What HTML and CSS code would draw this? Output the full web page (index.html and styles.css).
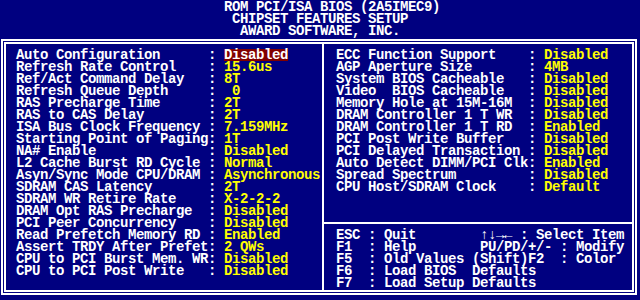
FILE: index.html
```html
<!DOCTYPE html>
<html lang="en">

<head>
    <meta charset="UTF-8">
    <meta name="viewport" content="width=device-width, initial-scale=1.0">
    <title>Chipset Features Setup</title>
    <link rel="stylesheet" href="styles.css">
</head>

<body>
    <div class="screen">
        <!-- Header -->
        <div class="head">
            <div class="head-line l1">ROM PCI/ISA BIOS (2A5IMEC9)</div>
            <div class="head-line l2">CHIPSET FEATURES SETUP</div>
            <div class="head-line l3">AWARD SOFTWARE, INC.</div>
        </div>

        <!-- Double frame -->
        <div class="frame">
            <div class="frame-inner">

                <!-- Left column of options -->
                <div class="panel panel-left">
                    <div class="opt"><span>Auto Configuration</span><span>:</span><span class="val"><span class="sel">Disabled</span></span></div>
                    <div class="opt"><span>Refresh Rate Control</span><span>:</span><span class="val">15.6us</span></div>
                    <div class="opt"><span>Ref/Act Command Delay</span><span>:</span><span class="val">8T</span></div>
                    <div class="opt"><span>Refresh Queue Depth</span><span>:</span><span class="val"> 0</span></div>
                    <div class="opt"><span>RAS Precharge Time</span><span>:</span><span class="val">2T</span></div>
                    <div class="opt"><span>RAS to CAS Delay</span><span>:</span><span class="val">2T</span></div>
                    <div class="opt"><span>ISA Bus Clock Frequency</span><span>:</span><span class="val">7.159MHz</span></div>
                    <div class="opt"><span>Starting Point of Paging</span><span>:</span><span class="val">1T</span></div>
                    <div class="opt"><span>NA# Enable</span><span>:</span><span class="val">Disabled</span></div>
                    <div class="opt"><span>L2 Cache Burst RD Cycle</span><span>:</span><span class="val">Normal</span></div>
                    <div class="opt"><span>Asyn/Sync Mode CPU/DRAM</span><span>:</span><span class="val">Asynchronous</span></div>
                    <div class="opt"><span>SDRAM CAS Latency</span><span>:</span><span class="val">2T</span></div>
                    <div class="opt"><span>SDRAM WR Retire Rate</span><span>:</span><span class="val">X-2-2-2</span></div>
                    <div class="opt"><span>DRAM Opt RAS Precharge</span><span>:</span><span class="val">Disabled</span></div>
                    <div class="opt"><span>PCI Peer Concurrency</span><span>:</span><span class="val">Disabled</span></div>
                    <div class="opt"><span>Read Prefetch Memory RD</span><span>:</span><span class="val">Enabled</span></div>
                    <div class="opt"><span>Assert TRDY After Prefet</span><span>:</span><span class="val">2 QWs</span></div>
                    <div class="opt"><span>CPU to PCI Burst Mem. WR</span><span>:</span><span class="val">Disabled</span></div>
                    <div class="opt"><span>CPU to PCI Post Write</span><span>:</span><span class="val">Disabled</span></div>
                </div>

                <!-- Right column: options + key help -->
                <div class="panel panel-right">
                    <div class="opt-list">
                        <div class="opt"><span>ECC Function Support</span><span>:</span><span class="val">Disabled</span></div>
                        <div class="opt"><span>AGP Aperture Size</span><span>:</span><span class="val">4MB</span></div>
                        <div class="opt"><span>System BIOS Cacheable</span><span>:</span><span class="val">Disabled</span></div>
                        <div class="opt"><span>Video  BIOS Cacheable</span><span>:</span><span class="val">Disabled</span></div>
                        <div class="opt"><span>Memory Hole at 15M-16M</span><span>:</span><span class="val">Disabled</span></div>
                        <div class="opt"><span>DRAM Controller 1 T WR</span><span>:</span><span class="val">Disabled</span></div>
                        <div class="opt"><span>DRAM Controller 1 T RD</span><span>:</span><span class="val">Enabled</span></div>
                        <div class="opt"><span>PCI Post Write Buffer</span><span>:</span><span class="val">Disabled</span></div>
                        <div class="opt"><span>PCI Delayed Transaction</span><span>:</span><span class="val">Disabled</span></div>
                        <div class="opt"><span>Auto Detect DIMM/PCI Clk</span><span>:</span><span class="val">Enabled</span></div>
                        <div class="opt"><span>Spread Spectrum</span><span>:</span><span class="val">Disabled</span></div>
                        <div class="opt"><span>CPU Host/SDRAM Clock</span><span>:</span><span class="val">Default</span></div>
                    </div>

                    <div class="help">
                        <div class="help-line">ESC : Quit        ↑↓→← : Select Item</div>
                        <div class="help-line">F1  : Help        PU/PD/+/- : Modify</div>
                        <div class="help-line">F5  : Old Values (Shift)F2  : Color</div>
                        <div class="help-line">F6  : Load BIOS  Defaults</div>
                        <div class="help-line">F7  : Load Setup Defaults</div>
                    </div>
                </div>

            </div>
        </div>
    </div>
</body>

</html>
```

FILE: styles.css
```css
/* Text mode screen: 80 x 25 cells of 8 x 12 px */
body {
    margin: 0;
    background-color: #000080;
    color: #ffffff;
    font-family: "Liberation Mono", "DejaVu Sans Mono", monospace;
    font-weight: bold;
    font-size: 14px;
    letter-spacing: -0.4px;
    line-height: 12px;
}

.screen {
    width: 640px;
    height: 300px;
    overflow: hidden;
}

/* Header lines */
.head {
    padding-top: 1px;
}

.head-line {
    height: 12px;
    white-space: pre;
}

.l1 {
    padding-left: 224px;
}

.l2 {
    padding-left: 232px;
}

.l3 {
    padding-left: 240px;
}

/* Double line frame */
.frame {
    box-sizing: border-box;
    width: 636px;
    margin: 2px 0 0 1px;
    border: 2px solid #ffffff;
    padding: 1px;
}

.frame-inner {
    border: 2px solid #ffffff;
    display: flex;
    height: 246px;
}

.panel {
    box-sizing: border-box;
    padding-top: 5px;
}

.panel-left {
    width: 316px;
    padding-left: 10px;
}

.panel-right {
    width: 310px;
    border-left: 2px solid #ffffff;
    display: flex;
    flex-direction: column;
}

.opt-list {
    padding-left: 12px;
}

/* One option row: name, colon, value */
.opt {
    display: grid;
    grid-template-columns: 192px 16px auto;
    height: 12px;
    white-space: pre;
}

.val {
    color: #ffff00;
}

.sel {
    display: inline-block;
    height: 12px;
    vertical-align: top;
    background-color: #800000;
    color: #ffffff;
}

/* Key help under the single line */
.help {
    margin-top: 29px;
    border-top: 2px solid #ffffff;
    padding: 5px 0 0 12px;
}

.help-line {
    height: 12px;
    white-space: pre;
}
```
